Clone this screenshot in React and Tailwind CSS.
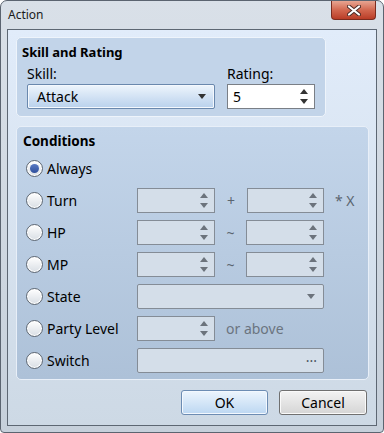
const Spin = ({ w = "w-[78px]" }) => (
  <div className={`${w} h-[25px] border border-[#848c96] bg-[#d4dee9] flex items-center justify-end pr-[6px]`}>
    <div className="flex flex-col gap-[5px]">
      <svg width="8" height="5" viewBox="0 0 8 5"><path d="M0 5 L4 0 L8 5 Z" fill="#6c737c" /></svg>
      <svg width="8" height="5" viewBox="0 0 8 5"><path d="M0 0 L8 0 L4 5 Z" fill="#6c737c" /></svg>
    </div>
  </div>
);

const Radio = ({ on }) => (
  <div className="w-[17px] h-[17px] rounded-full border border-[#5f6873] bg-gradient-to-b from-white to-[#d9dee4] flex items-center justify-center shadow-[inset_0_0_0_1px_#ffffff]">
    {on && <div className="w-[9px] h-[9px] rounded-full bg-gradient-to-b from-[#5b7bc4] to-[#2f4f9c]" />}
  </div>
);

const Row = ({ on, label, children }) => (
  <div className="flex items-center h-[25px]">
    <div className="w-[111px] flex items-center gap-[4px]">
      <Radio on={on} />
      <span>{label}</span>
    </div>
    {children}
  </div>
);

export default function App() {
  return (
    <div
      className="w-[384px] h-[433px] rounded-t-[7px] rounded-b-[4px] border border-[#5b6470] bg-gradient-to-b from-[#d9e0e8] to-[#c6d0db] flex flex-col text-[14px] text-black"
      style={{ fontFamily: '"Noto Sans", "Liberation Sans", sans-serif' }}
    >
      <div className="h-[28px] flex items-start justify-between">
        <span className="pl-[7px] pt-[5px] text-[12px] text-[#1b1b1b]">Action</span>
        <div className="mr-[7px] w-[45px] h-[19px] rounded-b-[4px] border border-t-0 border-[#7a2c1f] bg-gradient-to-b from-[#e7a592] via-[#d2674f] to-[#b93c26] flex items-center justify-center">
          <svg width="14" height="11" viewBox="0 0 14 11">
            <path d="M2 1.5 L12 9.5 M12 1.5 L2 9.5" stroke="#4a2a25" strokeWidth="4" strokeLinecap="round" />
            <path d="M2 1.5 L12 9.5 M12 1.5 L2 9.5" stroke="#ffffff" strokeWidth="2.2" strokeLinecap="round" />
          </svg>
        </div>
      </div>

      <div className="mx-[6px] h-[397px] border border-[#5d6773] bg-gradient-to-b from-[#e1ecfa] to-[#cdd9e5] px-[8px] pt-[7px] flex flex-col">
        <div className="w-[310px] h-[80px] rounded-[5px] border border-[#eef4fb] bg-[#c2d4e9] px-[5px] pt-[5px]">
          <div className="font-bold text-[13px] leading-[18px]">Skill and Rating</div>
          <div className="flex mt-[4px] pl-[5px]">
            <div className="w-[200px]">
              <div className="leading-[18px]">Skill:</div>
              <div className="mt-[1px] w-[188px] h-[25px] border border-[#6a88ad] rounded-[2px] bg-gradient-to-b from-[#eef5fc] to-[#b9d1ec] shadow-[inset_0_0_0_1px_#f4f8fd] flex items-center justify-between pl-[9px] pr-[8px]">
                <span>Attack</span>
                <svg width="8" height="5" viewBox="0 0 8 5"><path d="M0 0 L8 0 L4 5 Z" fill="#333" /></svg>
              </div>
            </div>
            <div>
              <div className="leading-[18px]">Rating:</div>
              <div className="mt-[1px] w-[88px] h-[25px] border border-[#7a7f86] bg-white flex items-center justify-between pl-[5px] pr-[6px]">
                <span>5</span>
                <div className="flex flex-col gap-[5px]">
                  <svg width="8" height="5" viewBox="0 0 8 5"><path d="M0 5 L4 0 L8 5 Z" fill="#333" /></svg>
                  <svg width="8" height="5" viewBox="0 0 8 5"><path d="M0 0 L8 0 L4 5 Z" fill="#333" /></svg>
                </div>
              </div>
            </div>
          </div>
        </div>

        <div className="mt-[9px] w-[353px] h-[254px] rounded-[5px] border border-[#e8eff8] bg-gradient-to-b from-[#c3d5ea] to-[#adc1d8] pl-[9px] pt-[5px]">
          <div className="font-bold text-[13.5px] leading-[18px] -ml-[3px]">Conditions</div>
          <div className="mt-[6px] flex flex-col gap-[7px]">
            <Row on label="Always" />
            <Row label="Turn">
              <Spin />
              <span className="w-[32px] text-center text-[#5b6570]">+</span>
              <Spin w="w-[77px]" />
              <span className="ml-[11px] text-[#5b6570]">* X</span>
            </Row>
            <Row label="HP">
              <Spin />
              <span className="w-[31px] text-center text-[#5b6570]">~</span>
              <Spin />
            </Row>
            <Row label="MP">
              <Spin />
              <span className="w-[31px] text-center text-[#5b6570]">~</span>
              <Spin />
            </Row>
            <Row label="State">
              <div className="w-[187px] h-[25px] rounded-[2px] border border-[#848c96] bg-[#d4dee9] flex items-center justify-end pr-[8px]">
                <svg width="8" height="5" viewBox="0 0 8 5"><path d="M0 0 L8 0 L4 5 Z" fill="#6c737c" /></svg>
              </div>
            </Row>
            <Row label="Party Level">
              <Spin />
              <span className="ml-[11px] text-[#6b7480]">or above</span>
            </Row>
            <Row label="Switch">
              <div className="w-[187px] h-[25px] rounded-[2px] border border-[#848c96] bg-[#d4dee9] flex items-center justify-end pr-[6px] text-[#4d5560] leading-none">
                ···
              </div>
            </Row>
          </div>
        </div>

        <div className="mt-[10px] flex justify-end gap-[11px] pr-[1px]">
          <button className="w-[87px] h-[25px] rounded-[3px] border border-[#6c8cb3] bg-gradient-to-b from-[#edf5fd] to-[#bcd7f2] shadow-[inset_0_0_0_1px_#f3f8fe]">
            OK
          </button>
          <button className="w-[88px] h-[25px] rounded-[3px] border border-[#707070] bg-gradient-to-b from-[#f3f3f3] to-[#d5d5d5] shadow-[inset_0_0_0_1px_#fafafa]">
            Cancel
          </button>
        </div>
      </div>
    </div>
  );
}
